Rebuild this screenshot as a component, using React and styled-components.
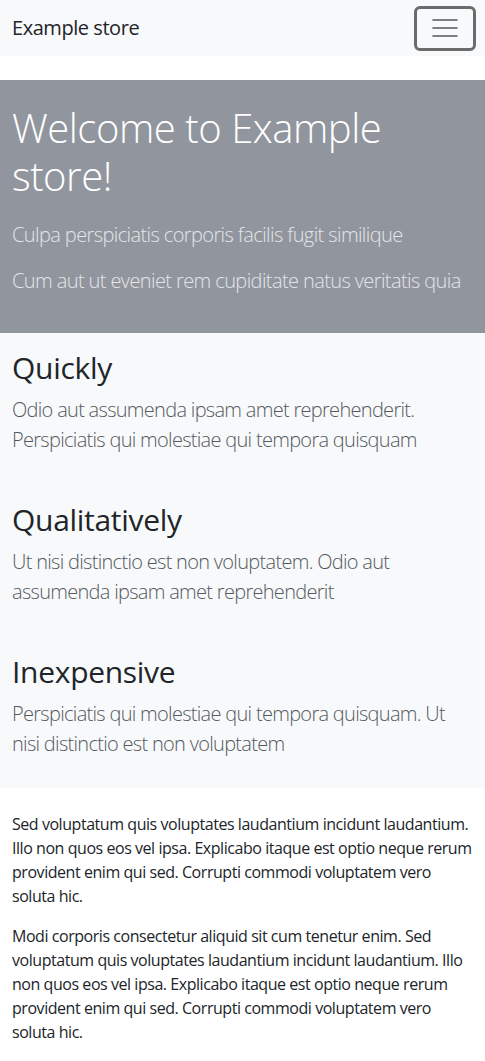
import React from "react";
import styled, { createGlobalStyle } from "styled-components";

const Global = createGlobalStyle`
  body {
    margin: 0;
    font-family: "Open Sans", "Noto Sans", sans-serif;
    color: #212529;
    background: #fff;
    font-size: 16px;
    line-height: 1.5;
  }
  * { box-sizing: border-box; }
`;

const Navbar = styled.nav`
  background: #f8f9fa;
  height: 56px;
  padding: 0 9px 0 12px;
  display: flex;
  align-items: center;
  justify-content: space-between;
  margin-bottom: 24px;
`;

const Brand = styled.a`
  font-size: 20px;
  line-height: 30px;
  letter-spacing: -0.45px;
  color: #212529;
  text-decoration: none;
`;

const Toggler = styled.button`
  width: 62px;
  height: 45px;
  border: 3px solid #6b6b6b;
  border-radius: 6px;
  background: transparent;
  display: flex;
  align-items: center;
  justify-content: center;
  padding: 0;
`;

const Hero = styled.section`
  background: #91969e;
  padding: 24px 12px 21px;
`;

const HeroTitle = styled.h1`
  margin: 0 0 20px;
  font-size: 40px;
  line-height: 48px;
  font-weight: 300;
  letter-spacing: -0.45px;
  color: #fff;
`;

const Lead = styled.p`
  margin: 0 0 ${(p) => (p.$flush ? "0" : "16px")};
  font-size: 20px;
  line-height: 30px;
  font-weight: 300;
  letter-spacing: ${(p) => p.$spacing || "-0.6px"};
  color: ${(p) => p.$color || "#e4e5e8"};
`;

const Features = styled.section`
  background: #f8f9fa;
  padding: 17px 12px 29px;
  display: flex;
  flex-direction: column;
  gap: 47px;
`;

const Feature = styled.div``;

const FeatureTitle = styled.h2`
  margin: 0 0 9px;
  font-size: 30px;
  line-height: 36px;
  font-weight: 400;
  letter-spacing: -0.3px;
  color: #212529;
`;

const Body = styled.section`
  padding: 24px 12px 0;
`;

const Para = styled.p`
  margin: 0 0 16px;
  font-size: 16px;
  line-height: 24px;
  letter-spacing: -0.45px;
`;

function MenuIcon() {
  return (
    <svg width="30" height="30" viewBox="0 0 30 30">
      <path d="M3 7h24M3 15h24M3 23h24" stroke="#555" strokeWidth="1.6" strokeLinecap="round" />
    </svg>
  );
}

const features = [
  ["Quickly", "Odio aut assumenda ipsam amet reprehenderit. Perspiciatis qui molestiae qui tempora quisquam"],
  ["Qualitatively", "Ut nisi distinctio est non voluptatem. Odio aut assumenda ipsam amet reprehenderit"],
  ["Inexpensive", "Perspiciatis qui molestiae qui tempora quisquam. Ut nisi distinctio est non voluptatem"],
];

export default function App() {
  return (
    <>
      <Global />
      <Navbar>
        <Brand href="#">Example store</Brand>
        <Toggler aria-label="menu"><MenuIcon /></Toggler>
      </Navbar>
      <Hero>
        <HeroTitle>Welcome to Example store!</HeroTitle>
        <Lead>Culpa perspiciatis corporis facilis fugit similique</Lead>
        <Lead>Cum aut ut eveniet rem cupiditate natus veritatis quia</Lead>
      </Hero>
      <Features>
        {features.map(([t, d]) => (
          <Feature key={t}>
            <FeatureTitle>{t}</FeatureTitle>
            <Lead $color="#55595f" $spacing="-0.7px" $flush>{d}</Lead>
          </Feature>
        ))}
      </Features>
      <Body>
        <Para>Sed voluptatum quis voluptates laudantium incidunt laudantium. Illo non quos eos vel ipsa. Explicabo itaque est optio neque rerum provident enim qui sed. Corrupti commodi voluptatem vero soluta hic.</Para>
        <Para>Modi corporis consectetur aliquid sit cum tenetur enim. Sed voluptatum quis voluptates laudantium incidunt laudantium. Illo non quos eos vel ipsa. Explicabo itaque est optio neque rerum provident enim qui sed. Corrupti commodi voluptatem vero soluta hic.</Para>
      </Body>
    </>
  );
}
